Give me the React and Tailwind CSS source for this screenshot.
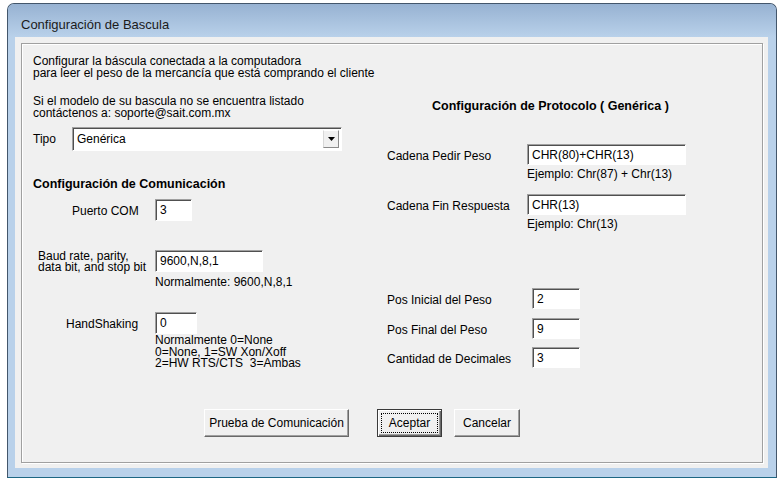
import React from "react";

const sunken =
  "bg-white border border-t-[#a0a0a0] border-l-[#a0a0a0] border-r-white border-b-white shadow-[inset_1px_1px_0_#505050] flex items-center pl-[4px] text-[12px]";

function Field({ value, className = "" }) {
  return <div className={`${sunken} ${className}`}>{value}</div>;
}

function Btn({ children, className = "" }) {
  return (
    <button
      className={`h-[28px] bg-[#f0f0f0] border border-t-white border-l-white border-r-[#696969] border-b-[#696969] shadow-[inset_-1px_-1px_0_#a0a0a0] text-[12px] leading-none ${className}`}
    >
      {children}
    </button>
  );
}

export default function App() {
  return (
    <div className="w-[784px] h-[480px] bg-white pt-[3px] pl-[7px] font-['Liberation_Sans',Arial,sans-serif] text-black">
      <div className="w-[770px] h-[475px] rounded-t-[7px] border border-[#43566b] border-b-[#1d6683] bg-[#b9d1ea] flex flex-col">
        <div className="h-[33px] rounded-t-[6px] bg-gradient-to-b from-[#97b2d2] to-[#b9d1ea] pl-[13px] pt-[13px] text-[13px] leading-[16px] text-[#1b1b1b]">
          Configuración de Bascula
        </div>

        <div className="ml-[7px] mr-[8px] h-[431px] bg-[#f0f0f0] pt-[6px] pl-[6px] pr-[5px] pb-[5px]">
          <div className="h-full border border-[#a0a0a0] shadow-[1px_1px_0_#fff,inset_1px_1px_0_#fff] flex flex-col">
            <div className="grid grid-cols-[365px_1fr] h-[326px]">
              {/* columna izquierda */}
              <div className="pl-[11px] pt-[11px] text-[12px]">
                <p className="leading-[12px] whitespace-nowrap">
                  Configurar la báscula conectada a la computadora
                  <br />
                  para leer el peso de la mercancía que está comprando el cliente
                </p>
                <p className="mt-[16px] leading-[12px]">
                  Si el modelo de su bascula no se encuentra listado
                  <br />
                  contáctenos a: soporte@sait.com.mx
                </p>

                <div className="mt-[8px] flex items-center h-[24px]">
                  <span className="w-[39px]">Tipo</span>
                  <div className={`${sunken} w-[270px] h-[24px] pr-[2px]`}>
                    <span className="flex-1">Genérica</span>
                    <div className="w-[16px] h-[18px] bg-[#f0f0f0] border border-t-white border-l-[#d8d8d8] border-r-[#8a8a8a] border-b-[#8a8a8a] flex items-center justify-center">
                      <svg width="7" height="4" viewBox="0 0 7 4">
                        <path d="M0 0h7L3.5 4z" fill="#000" />
                      </svg>
                    </div>
                  </div>
                </div>

                <div className="mt-[26px] leading-[15px] font-bold text-[12.5px]">
                  Configuración de Comunicación
                </div>

                <div className="mt-[7px] flex pl-[39px]">
                  <span className="w-[83px] leading-[22px] pt-[1px]">Puerto COM</span>
                  <Field value="3" className="w-[37px] h-[22px]" />
                </div>

                <div className="mt-[28px] flex pl-[5px]">
                  <span className="w-[117px] leading-[11px] pt-[1px]">
                    Baud rate, parity,
                    <br />
                    data bit, and stop bit
                  </span>
                  <div>
                    <Field value="9600,N,8,1" className="w-[108px] h-[22px]" />
                    <p className="mt-[4px] leading-[12px]">Normalmente: 9600,N,8,1</p>
                  </div>
                </div>

                <div className="mt-[24px] flex pl-[33px]">
                  <span className="w-[89px] leading-[22px] pt-[1px]">HandShaking</span>
                  <div>
                    <Field value="0" className="w-[42px] h-[22px]" />
                    <p className="mt-[1px] leading-[11.5px] whitespace-pre">
                      {"Normalmente 0=None\n0=None, 1=SW Xon/Xoff\n2=HW RTS/CTS  3=Ambas"}
                    </p>
                  </div>
                </div>
              </div>

              {/* columna derecha */}
              <div className="text-[12px]">
                <div className="mt-[55px] ml-[45px] leading-[15px] font-bold text-[12.5px]">
                  Configuración de Protocolo ( Genérica )
                </div>

                <div className="mt-[30px] flex">
                  <span className="w-[140px] leading-[21px] pt-[2px]">Cadena Pedir Peso</span>
                  <div>
                    <Field value="CHR(80)+CHR(13)" className="w-[159px] h-[21px]" />
                    <p className="mt-[3px] leading-[12px]">Ejemplo: Chr(87) + Chr(13)</p>
                  </div>
                </div>

                <div className="mt-[14px] flex">
                  <span className="w-[140px] leading-[21px] pt-[2px]">Cadena Fin Respuesta</span>
                  <div>
                    <Field value="CHR(13)" className="w-[159px] h-[21px]" />
                    <p className="mt-[3px] leading-[12px]">Ejemplo: Chr(13)</p>
                  </div>
                </div>

                <div className="mt-[58px] flex">
                  <span className="w-[145px] leading-[21px] pt-[2px]">Pos Inicial del Peso</span>
                  <Field value="2" className="w-[48px] h-[21px]" />
                </div>
                <div className="mt-[7px] flex">
                  <span className="w-[145px] leading-[21px] pt-[2px]">Pos Final del Peso</span>
                  <Field value="9" className="w-[48px] h-[21px]" />
                </div>
                <div className="mt-[6px] flex">
                  <span className="w-[145px] leading-[21px] pt-[2px]">Cantidad de Decimales</span>
                  <Field value="3" className="w-[48px] h-[21px]" />
                </div>
              </div>
            </div>

            <div className="mt-[39px] pl-[182px] flex items-start">
              <Btn className="w-[145px]">Prueba de Comunicación</Btn>
              <button className="ml-[28px] w-[65px] h-[28px] bg-[#f0f0f0] border border-[#3a3a3a] shadow-[inset_1px_1px_0_#fff,inset_-1px_-1px_0_#696969,inset_-2px_-2px_0_#a0a0a0] p-[3px] text-[12px] leading-none">
                <span className="h-full border border-dotted border-black flex items-center justify-center">
                  Aceptar
                </span>
              </button>
              <Btn className="ml-[12px] w-[66px]">Cancelar</Btn>
            </div>
          </div>
        </div>
      </div>
    </div>
  );
}
